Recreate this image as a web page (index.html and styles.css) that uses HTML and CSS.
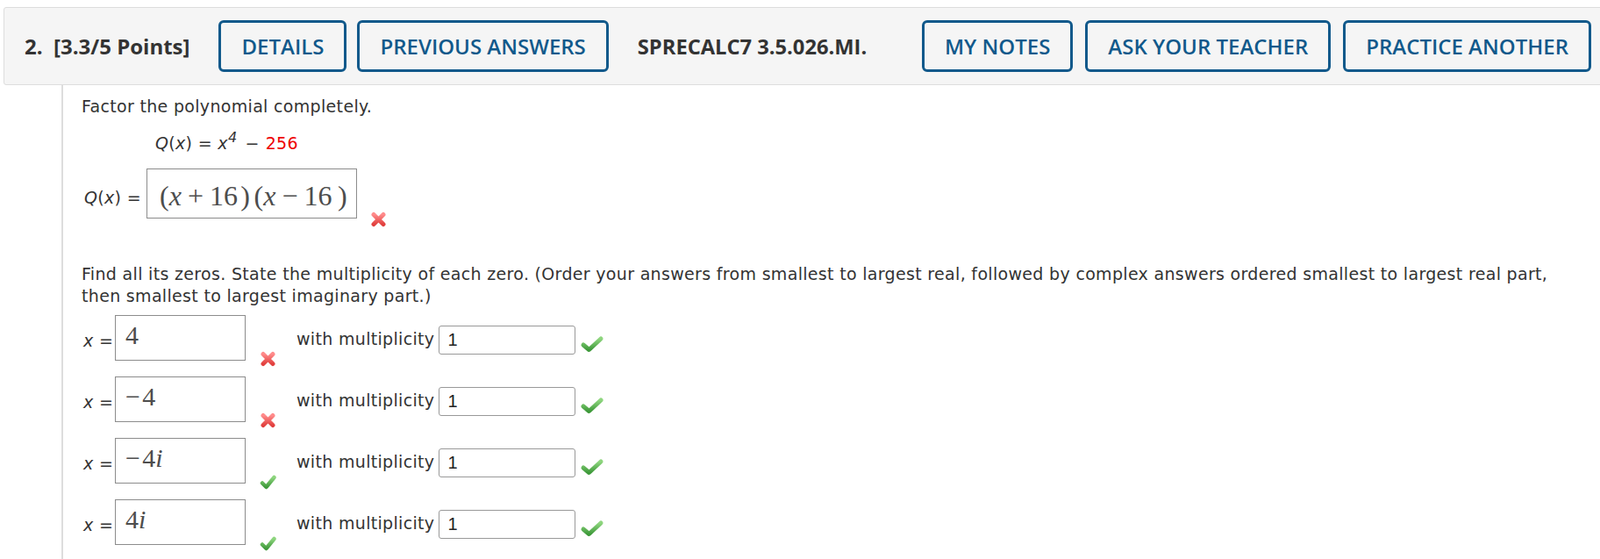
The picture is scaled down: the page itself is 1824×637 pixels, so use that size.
FILE: index.html
```html
<!DOCTYPE html>
<html>
<head>
<meta charset="utf-8">
<link rel="stylesheet" href="styles.css">
</head>
<body>
<div class="page">
  <div class="qhead">
    <span class="qnum">2.  [3.3/5 Points]</span>
    <span class="btn">DETAILS</span>
    <span class="btn btn-prev">PREVIOUS ANSWERS</span>
    <span class="qref">SPRECALC7 3.5.026.MI.</span>
    <div class="tools">
      <span class="btn">MY NOTES</span>
      <span class="btn">ASK YOUR TEACHER</span>
      <span class="btn">PRACTICE ANOTHER</span>
    </div>
  </div>
  <div class="qbody">
    <p class="intro">Factor the polynomial completely.</p>
    <div class="formula"><i>Q</i>(<i>x</i>) = <i>x</i><sup>4</sup><span class="fop">−</span><span class="red">256</span></div>
    <div class="factor-row">
      <span class="flbl"><i>Q</i>(<i>x</i>) =</span>
      <span class="mbox mbox-big">(<i>x</i><span class="op">+</span>16<span class="ts"></span>)<span class="gap"></span>(<i>x</i><span class="op">−</span>16<span class="ts2"></span>)</span>
      <svg class="mark mark-big" width="19" height="18" viewBox="0 0 19 18"><defs><linearGradient id="rx1" x1="0" y1="0" x2="0" y2="1"><stop offset="0" stop-color="#ff8c8c"/><stop offset="1" stop-color="#e2413f"/></linearGradient></defs><path d="M4 3.5 L15 14.5 M15 3.5 L4 14.5" stroke="url(#rx1)" stroke-width="5" stroke-linecap="round"/></svg>
    </div>
    <p class="zeros">Find all its zeros. State the multiplicity of each zero. (Order your answers from smallest to largest real, followed by complex answers ordered smallest to largest real part,<br>then smallest to largest imaginary part.)</p>

    <div class="zero-row">
      <span class="zlbl"><i>x</i> =</span>
      <span class="mbox zbox">4</span>
      <svg class="mark" width="19" height="18" viewBox="0 0 19 18"><defs><linearGradient id="rx2" x1="0" y1="0" x2="0" y2="1"><stop offset="0" stop-color="#ff8c8c"/><stop offset="1" stop-color="#e2413f"/></linearGradient></defs><path d="M4 3.5 L15 14.5 M15 3.5 L4 14.5" stroke="url(#rx2)" stroke-width="5" stroke-linecap="round"/></svg>
      <span class="mult">with multiplicity</span>
      <input class="mult-in" type="text" value="1" readonly>
      <svg class="check" width="28" height="20" viewBox="0 0 28 20"><defs><linearGradient id="ck1" x1="0" y1="0" x2="0" y2="1"><stop offset="0" stop-color="#8fd67f"/><stop offset="1" stop-color="#3f9a3b"/></linearGradient></defs><path d="M4 11 L10.5 16.5 L24 4" fill="none" stroke="url(#ck1)" stroke-width="5" stroke-linecap="round" stroke-linejoin="round"/></svg>
    </div>

    <div class="zero-row">
      <span class="zlbl"><i>x</i> =</span>
      <span class="mbox zbox"><span class="neg">−</span>4</span>
      <svg class="mark" width="19" height="18" viewBox="0 0 19 18"><defs><linearGradient id="rx3" x1="0" y1="0" x2="0" y2="1"><stop offset="0" stop-color="#ff8c8c"/><stop offset="1" stop-color="#e2413f"/></linearGradient></defs><path d="M4 3.5 L15 14.5 M15 3.5 L4 14.5" stroke="url(#rx3)" stroke-width="5" stroke-linecap="round"/></svg>
      <span class="mult">with multiplicity</span>
      <input class="mult-in" type="text" value="1" readonly>
      <svg class="check" width="28" height="20" viewBox="0 0 28 20"><defs><linearGradient id="ck2" x1="0" y1="0" x2="0" y2="1"><stop offset="0" stop-color="#8fd67f"/><stop offset="1" stop-color="#3f9a3b"/></linearGradient></defs><path d="M4 11 L10.5 16.5 L24 4" fill="none" stroke="url(#ck2)" stroke-width="5" stroke-linecap="round" stroke-linejoin="round"/></svg>
    </div>

    <div class="zero-row">
      <span class="zlbl"><i>x</i> =</span>
      <span class="mbox zbox"><span class="neg">−</span>4<i>i</i></span>
      <svg class="mark" width="19" height="19" viewBox="0 0 19 19"><defs><linearGradient id="ck3" x1="0" y1="0" x2="0" y2="1"><stop offset="0" stop-color="#8fd67f"/><stop offset="1" stop-color="#3f9a3b"/></linearGradient></defs><path d="M3 10.5 L7.5 15 L16.5 4" fill="none" stroke="url(#ck3)" stroke-width="4.5" stroke-linecap="round" stroke-linejoin="round"/></svg>
      <span class="mult">with multiplicity</span>
      <input class="mult-in" type="text" value="1" readonly>
      <svg class="check" width="28" height="20" viewBox="0 0 28 20"><defs><linearGradient id="ck4" x1="0" y1="0" x2="0" y2="1"><stop offset="0" stop-color="#8fd67f"/><stop offset="1" stop-color="#3f9a3b"/></linearGradient></defs><path d="M4 11 L10.5 16.5 L24 4" fill="none" stroke="url(#ck4)" stroke-width="5" stroke-linecap="round" stroke-linejoin="round"/></svg>
    </div>

    <div class="zero-row">
      <span class="zlbl"><i>x</i> =</span>
      <span class="mbox zbox">4<i>i</i></span>
      <svg class="mark" width="19" height="19" viewBox="0 0 19 19"><defs><linearGradient id="ck5" x1="0" y1="0" x2="0" y2="1"><stop offset="0" stop-color="#8fd67f"/><stop offset="1" stop-color="#3f9a3b"/></linearGradient></defs><path d="M3 10.5 L7.5 15 L16.5 4" fill="none" stroke="url(#ck5)" stroke-width="4.5" stroke-linecap="round" stroke-linejoin="round"/></svg>
      <span class="mult">with multiplicity</span>
      <input class="mult-in" type="text" value="1" readonly>
      <svg class="check" width="28" height="20" viewBox="0 0 28 20"><defs><linearGradient id="ck6" x1="0" y1="0" x2="0" y2="1"><stop offset="0" stop-color="#8fd67f"/><stop offset="1" stop-color="#3f9a3b"/></linearGradient></defs><path d="M4 11 L10.5 16.5 L24 4" fill="none" stroke="url(#ck6)" stroke-width="5" stroke-linecap="round" stroke-linejoin="round"/></svg>
    </div>
  </div>
</div>
</body>
</html>
```
FILE: styles.css
```css
html, body {
  margin: 0;
  padding: 0;
  background: #fff;
  overflow: hidden;
}
body {
  font-family: "DejaVu Sans", Verdana, sans-serif;
  font-size: 19px;
  letter-spacing: 0.32px;
  color: #333;
  height: 637px;
}
.page {
  padding: 8px 0 0 4px;
}
.qhead {
  display: flex;
  align-items: center;
  height: 87px;
  margin-right: -4px;
  padding: 0 13px 0 23px;
  background: #f5f5f5;
  border: 1px solid #ddd;
  border-radius: 3px;
  font-family: "Open Sans", sans-serif;
  font-size: 24px;
  letter-spacing: 0;
}
.qnum {
  font-weight: 700;
  color: #333;
  white-space: pre;
  margin-right: 33px;
}
.btn {
  display: flex;
  align-items: center;
  box-sizing: border-box;
  height: 59px;
  padding: 0 23px;
  border: 3px solid #11598b;
  border-radius: 6px;
  color: #11598b;
  font-weight: 600;
  white-space: nowrap;
}
.btn-prev {
  margin-left: 12px;
}
.qref {
  font-weight: 700;
  color: #333;
  font-size: 23.7px;
  margin-left: 33px;
}
.tools {
  margin-left: auto;
  display: flex;
  gap: 14px;
}
.qbody {
  margin-left: 66px;
  border-left: 2px solid #ddd;
  padding: 12px 20px 0 21px;
  height: 560px;
}
.intro {
  margin: 0 0 17px;
  line-height: 25px;
}
.formula {
  padding-left: 84px;
  line-height: 25px;
  margin-bottom: 16px;
}
.formula sup {
  font-size: 16px;
  font-style: italic;
  line-height: 0;
  vertical-align: 8px;
}
.fop {
  margin: 0 7px 0 9px;
}
.red {
  color: #e00;
}
.factor-row {
  display: flex;
  align-items: flex-start;
  height: 57px;
  padding-left: 3px;
}
.flbl {
  width: 71px;
  margin-top: 21px;
  line-height: 25px;
}
.mbox {
  box-sizing: border-box;
  border: 1px solid #8c8c8c;
  font-family: "Liberation Serif", "Times New Roman", serif;
  letter-spacing: 0;
  color: #4d4d4d;
  white-space: nowrap;
}
.mbox-big {
  width: 240px;
  height: 57px;
  font-size: 32px;
  line-height: 32px;
  padding: 14px 0 0 14px;
}
.op {
  margin: 0 0.22em;
}
.ts {
  display: inline-block;
  width: 0.1em;
}
.ts2 {
  display: inline-block;
  width: 0.2em;
}
.gap {
  display: inline-block;
  width: 0.15em;
}
.mark {
  margin-left: 15px;
  margin-top: 49px;
}
.zeros {
  margin: 51px 0 9px;
  line-height: 25px;
}
.zero-row {
  display: flex;
  align-items: flex-start;
  height: 52px;
  margin-bottom: 18px;
}
.zlbl {
  width: 36px;
  margin-left: 2px;
  margin-top: 17px;
  line-height: 25px;
}
.zbox {
  width: 149px;
  height: 52px;
  font-size: 30px;
  line-height: 30px;
  padding: 7px 0 0 11px;
}
.neg {
  margin-right: 0.08em;
}
.zero-row .mark {
  margin-left: 16px;
  margin-top: 41px;
}
.mult {
  margin-left: 23px;
  margin-top: 15px;
  line-height: 25px;
}
.mult-in {
  margin: 12px 0 0 5px;
  width: 156px;
  height: 33px;
  box-sizing: border-box;
  border: 1px solid #999;
  border-radius: 3px;
  padding: 0 0 0 9px;
  font-family: "Liberation Sans", Arial, sans-serif;
  font-size: 20px;
  color: #222;
  background: #fff;
  outline: none;
}
.check {
  margin-left: 5px;
  margin-top: 23px;
}
```
